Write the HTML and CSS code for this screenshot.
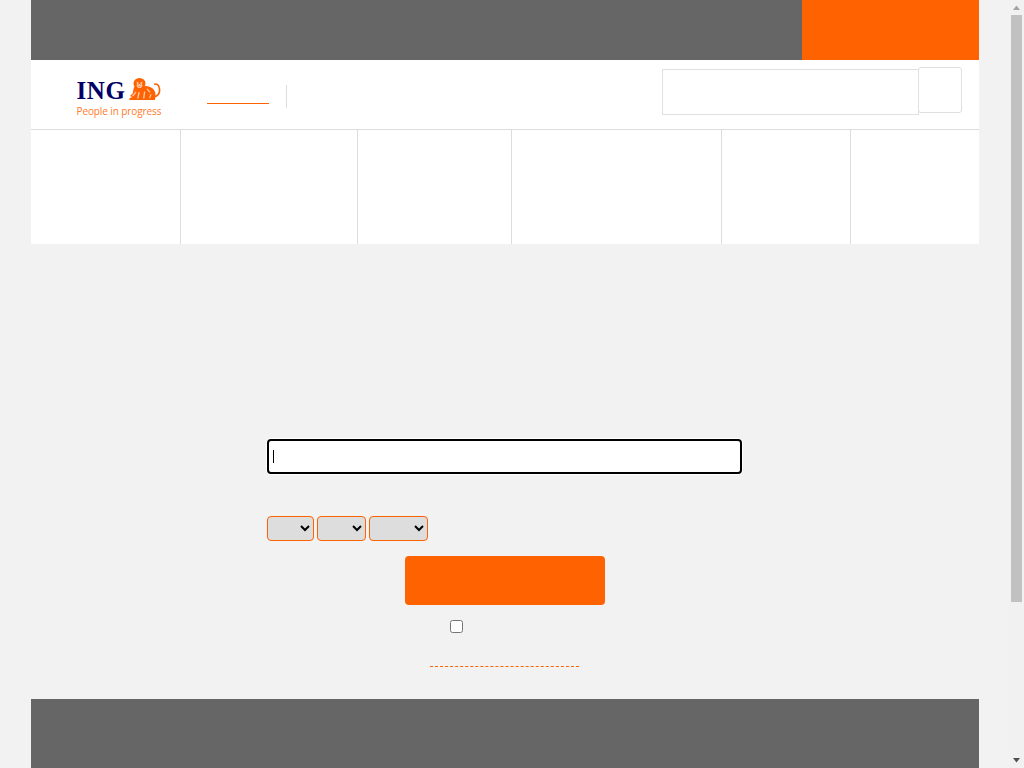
FILE: index.html
```html
<!DOCTYPE html>
<html lang="en">
<head>
  <meta charset="utf-8">
  <meta name="viewport" content="width=device-width,initial-scale=1">
  <title>ING</title>
  <link rel="stylesheet" href="styles.css">
</head>
<body>
  <div class="viewport">
    <div class="page">
      <div class="topbar">
        <a class="topbar-cta" href="#" aria-label="Login"></a>
      </div>

      <header class="header">
        <a class="logo" href="#">
          <span class="logo-top">
            <span class="logo-name">ING</span>
            <svg class="logo-lion" viewBox="0 0 32 22" width="32" height="22" aria-hidden="true">
              <ellipse fill="#ff6200" cx="10.500" cy="5.500" rx="6" ry="5.500"/>
              <path fill="#ff6200" d="M5 9L17 8c5 .5 9 3 9.500 8l-.5 6H.5C0 21 .5 20 2 19.500l2-.5-2.500-.5c-.5-1 .5-2 2-2.500z"/>
              <path fill="none" stroke="#ff6200" stroke-width="1.600" d="M25 19c4-1 6-4 5.500-8-.5-4-3-6-5.500-4.500"/>
              <path fill="#ffc9a6" d="M7.500 3.500l2 1 .5 1.500h1l.5-1.500 2-1-.5 2.500.5 1.500-1.500 2.500h-3l-1.500-2.500.5-1.500zM3 18l3.500-4.500 1 .8-3 3.900zM8 20.500l1.500-6.500 1.300.3-1.300 6.200zM14 20.500l1-7 1.300.2-.9 6.800zM18.500 10.500l3 3.500-1 .7-3-3.500zM20 20l1.500-4 1.100.4-1.500 3.800z"/>
              <path fill="#ff6200" d="M8.800 5.800h1v1h-1zM11.300 5.800h1v1h-1zM9.800 8.300h1.500v.7H9.800z"/>
            </svg>
          </span>
          <span class="logo-tag">People in progress</span>
        </a>
        <a class="header-link" href="#" aria-label="Private"></a>
        <span class="header-sep"></span>
        <form class="search">
          <input class="search-input" type="text" aria-label="Search">
          <button class="search-btn" type="button" aria-label="Search"></button>
        </form>
      </header>

      <nav class="nav">
        <a class="nav-item nav-1" href="#" aria-label="Accounts"></a>
        <a class="nav-item nav-2" href="#" aria-label="Cards"></a>
        <a class="nav-item nav-3" href="#" aria-label="Loans"></a>
        <a class="nav-item nav-4" href="#" aria-label="Savings"></a>
        <a class="nav-item nav-5" href="#" aria-label="Insurance"></a>
        <a class="nav-item nav-6" href="#" aria-label="Help"></a>
      </nav>

      <main class="main">
        <form class="login">
          <div class="login-field">
            <input class="login-input" type="text" aria-label="Customer number" autofocus>
          </div>
          <div class="birth">
            <select class="birth-day" aria-label="Day"><option></option></select>
            <select class="birth-month" aria-label="Month"><option></option></select>
            <select class="birth-year" aria-label="Year"><option></option></select>
          </div>
          <button class="login-btn" type="button" aria-label="Continue"></button>
          <div class="remember">
            <input class="remember-check" type="checkbox" aria-label="Remember me">
          </div>
          <a class="login-link" href="#" aria-label="Forgot"></a>
        </form>
      </main>

      <footer class="footer"></footer>
    </div>
  </div>

  <div class="scrollbar" aria-hidden="true">
    <svg class="scroll-arrow" viewBox="0 0 15 15" width="15" height="15"><path fill="#a3a3a3" d="M7.500 5.500L11 10H4z"/></svg>
    <div class="scroll-track"><div class="scroll-thumb"></div></div>
    <svg class="scroll-arrow" viewBox="0 0 15 15" width="15" height="15"><path fill="#505050" d="M4 5h7l-3.500 4.500z"/></svg>
  </div>
</body>
</html>
```

FILE: styles.css
```css
:root {
  --bg: #f2f2f2;
  --grey: #666;
  --orange: #ff6200;
  --line: #ddd;
}
* {
  box-sizing: border-box;
}
html, body {
  height: 100%;
  overflow: hidden;
}
body {
  margin: 0;
  background: var(--bg);
  font-family: "Liberation Sans", Arial, sans-serif;
  display: flex;
}
.viewport {
  flex: 1;
  min-width: 0;
  height: 100%;
  overflow: hidden;
}
.page {
  width: 948px;
  margin: 0 auto;
}

/* window scrollbar */
.scrollbar {
  flex: none;
  width: 15px;
  height: 100%;
  background: #f1f1f1;
  display: flex;
  flex-direction: column;
}
.scroll-arrow {
  display: block;
  flex: none;
}
.scroll-track {
  flex: 1;
  padding: 0 2px;
}
.scroll-thumb {
  height: 587px;
  background: #c1c1c1;
}

/* top bar */
.topbar {
  height: 60px;
  background: var(--grey);
  display: flex;
  justify-content: flex-end;
}
.topbar-cta {
  display: block;
  width: 177px;
  background: var(--orange);
}

/* header */
.header {
  height: 70px;
  background: #fff;
  border-bottom: 1px solid var(--line);
  display: flex;
  align-items: flex-start;
  padding-left: 46px;
}
.logo {
  display: block;
  width: 84px;
  margin-top: 18px;
  text-decoration: none;
}
.logo-top {
  display: flex;
  align-items: flex-end;
  justify-content: space-between;
  height: 22px;
}
.logo-name {
  margin-bottom: -2px;
  font-family: "Liberation Serif", "Times New Roman", serif;
  font-weight: bold;
  font-size: 25px;
  line-height: 22px;
  color: #000066;
  letter-spacing: 0.6px;
}
.logo-lion {
  display: block;
}
.logo-tag {
  display: block;
  margin-top: 4px;
  font-family: "Open Sans", sans-serif;
  font-size: 10px;
  line-height: 14px;
  letter-spacing: -0.1px;
  color: #ff7a2a;
  white-space: nowrap;
}
.header-link {
  display: block;
  width: 62px;
  height: 1px;
  margin: 43px 0 0 46px;
  background: var(--orange);
}
.header-sep {
  display: block;
  width: 1px;
  height: 23px;
  margin: 25px 0 0 17px;
  background: var(--line);
}
.search {
  display: flex;
  align-items: flex-start;
  margin-left: auto;
  margin-right: 17px;
  padding-top: 7px;
}
.search-input {
  width: 257px;
  height: 46px;
  margin-top: 2px;
  padding: 0 8px;
  background: #fff;
  border: 1px solid #e0e0e0;
  border-radius: 0;
  outline: none;
}
.search-btn {
  width: 44px;
  height: 46px;
  margin-left: -1px;
  padding: 0;
  background: #fff;
  border: 1px solid #e0e0e0;
  border-radius: 3px;
}

/* nav */
.nav {
  height: 114px;
  background: #fff;
  display: flex;
}
.nav-item {
  display: block;
  border-right: 1px solid var(--line);
}
.nav-1 { width: 150px; }
.nav-2 { width: 177px; }
.nav-3 { width: 154px; }
.nav-4 { width: 210px; }
.nav-5 { width: 129px; }
.nav-6 { flex: 1; border-right: none; }

/* login form */
.main {
  height: 455px;
  padding-top: 195px;
}
.login {
  width: 475px;
  margin: 0 auto;
  display: flex;
  flex-direction: column;
  align-items: center;
}
.login-field {
  position: relative;
  width: 100%;
  height: 35px;
}
/* caret shown in the focused field */
.login-field::after {
  content: "";
  position: absolute;
  left: 6px;
  top: 11px;
  width: 1px;
  height: 13px;
  background: #000;
}
.login-input {
  display: block;
  width: 100%;
  height: 35px;
  padding: 0 4px;
  background: #fff;
  border: 2px solid #000;
  border-radius: 4px;
  box-shadow: 0 0 0 1px #fff;
  outline: none;
  caret-color: transparent;
  font-size: 14px;
}
.birth {
  align-self: flex-start;
  display: flex;
  gap: 3px;
  margin-top: 42px;
}
.birth select {
  height: 25px;
  background: #ddd;
  border: 1px solid var(--orange);
  border-radius: 4px;
}
.birth-day { width: 47px; }
.birth-month { width: 49px; }
.birth-year { width: 59px; }
.login-btn {
  width: 200px;
  height: 49px;
  margin-top: 15px;
  padding: 0;
  background: var(--orange);
  border: none;
  border-radius: 4px;
}
.remember {
  align-self: flex-start;
  display: flex;
  margin: 15px 0 0 183px;
}
.remember-check {
  width: 13px;
  height: 13px;
  margin: 0;
}
.login-link {
  display: block;
  width: 149px;
  height: 1px;
  margin-top: 33px;
  border-bottom: 1px dashed var(--orange);
}

/* footer */
.footer {
  height: 267px;
  background: var(--grey);
}
```
